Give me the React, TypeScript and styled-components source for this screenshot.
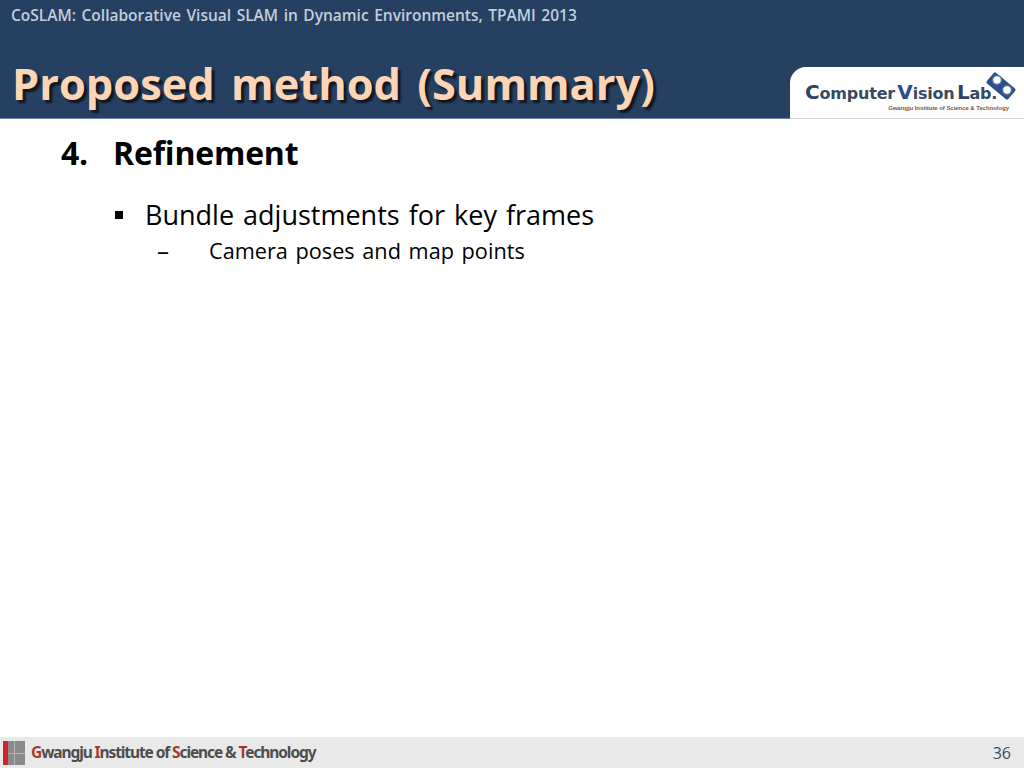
import React from 'react';
import styled, { createGlobalStyle } from 'styled-components';

const GlobalStyle = createGlobalStyle`
  html, body {
    margin: 0;
    padding: 0;
    background: #fff;
  }
`;

const Slide = styled.div`
  width: 1024px;
  height: 768px;
  display: flex;
  flex-direction: column;
  overflow: hidden;
  font-family: 'Open Sans', 'Noto Sans', sans-serif;
`;

const Header = styled.header`
  height: 118px;
  flex: none;
  background: #254061;
  border-bottom: 1px solid #6f83a0;
  display: flex;
  justify-content: space-between;
  align-items: flex-end;
`;

const HeaderText = styled.div`
  display: flex;
  flex-direction: column;
  align-self: stretch;
  padding-left: 11px;
`;

const Conference = styled.div`
  margin-top: 5px;
  font-size: 15.5px;
  line-height: 20px;
  font-weight: 600;
  color: #c3ced9;
  word-spacing: 1.5px;
`;

const Title = styled.h1`
  margin: 30px 0 0 1px;
  font-size: 43.4px;
  line-height: 58px;
  font-weight: 700;
  word-spacing: 5px;
  color: #fbd5b5;
  text-shadow: 3px 3px 2px #10161f;
  white-space: nowrap;
`;

const LogoCard = styled.div`
  width: 234px;
  height: 52px;
  margin-bottom: -1px;
  background: #fff;
  border-top-left-radius: 16px;
  border-bottom: 1px solid #d5d5d5;
  display: flex;
  flex-direction: column;
  align-items: flex-start;
  padding: 14px 0 0 15px;
  box-sizing: border-box;
  position: relative;
`;

const LogoName = styled.div`
  font-family: 'DejaVu Sans', sans-serif;
  font-size: 16px;
  line-height: 22px;
  font-weight: 700;
  color: #3a4a5e;
  white-space: nowrap;
  word-spacing: -3px;
  letter-spacing: -0.2px;
`;

const LogoInitial = styled.span<{ $blue?: boolean }>`
  color: ${({ $blue }) => ($blue ? '#2b4f8c' : '#31445e')};
  font-size: 20px;
`;

const LogoSub = styled.div`
  align-self: flex-end;
  margin: -1px 15px 0 0;
  font-family: 'Liberation Sans', sans-serif;
  font-size: 6px;
  line-height: 8px;
  font-weight: 700;
  letter-spacing: -0.05px;
  color: #7a5a4a;
  white-space: nowrap;
`;

const CameraMark = styled.svg`
  position: absolute;
  right: 8px;
  top: 4px;
`;

const Content = styled.main`
  flex: 1;
  padding: 13px 0 0 61px;
  color: #000;
`;

const HeadingRow = styled.div`
  display: flex;
  font-size: 32px;
  line-height: 42px;
  font-weight: 700;
  letter-spacing: -0.2px;
`;

const HeadingNumber = styled.span`
  width: 52px;
`;

const BulletRow = styled.div`
  display: flex;
  align-items: center;
  margin: 23px 0 0 54px;
  font-size: 27px;
  line-height: 36px;
  word-spacing: 2px;
`;

const Square = styled.span`
  width: 8px;
  height: 8px;
  background: #000;
  margin-right: 22px;
`;

const SubRow = styled.div`
  display: flex;
  align-items: center;
  margin: 0 0 0 96px;
  font-size: 21.7px;
  line-height: 36px;
  word-spacing: 2px;
`;

const Dash = styled.span`
  width: 52px;
  font-size: 24px;
`;

const Footer = styled.footer`
  height: 31px;
  flex: none;
  background: #e9e9e9;
  display: flex;
  align-items: center;
  padding: 0 13px 0 3px;
`;

const GistMark = styled.svg`
  flex: none;
`;

const Institute = styled.div`
  margin: 0 0 2px 6px;
  font-family: 'Noto Sans', sans-serif;
  font-size: 15.5px;
  font-weight: 700;
  letter-spacing: -1.1px;
  color: #4d4d4f;
  white-space: nowrap;
`;

const Accent = styled.span`
  color: #a8372f;
`;

const PageNumber = styled.div`
  margin-left: auto;
  font-size: 16px;
  color: #3b4a63;
`;

export default function App() {
  return (
    <Slide>
      <GlobalStyle />
      <Header>
        <HeaderText>
          <Conference>CoSLAM: Collaborative Visual SLAM in Dynamic Environments, TPAMI 2013</Conference>
          <Title>Proposed method (Summary)</Title>
        </HeaderText>
        <LogoCard>
          <LogoName>
            <LogoInitial>C</LogoInitial>omputer <LogoInitial $blue>V</LogoInitial>ision <LogoInitial>L</LogoInitial>ab.
          </LogoName>
          <LogoSub>Gwangju Institute of Science &amp; Technology</LogoSub>
          <CameraMark width="30" height="30" viewBox="0 0 30 30">
            <rect x="1" y="8" width="28" height="14" rx="2" fill="#2b4f8c" transform="rotate(40 15 15)" />
            <circle cx="11" cy="9" r="4.5" fill="#fff" stroke="#5a6f90" strokeWidth="1.5" />
            <circle cx="21" cy="19" r="4.5" fill="#fff" stroke="#5a6f90" strokeWidth="1.5" />
          </CameraMark>
        </LogoCard>
      </Header>
      <Content>
        <HeadingRow>
          <HeadingNumber>4.</HeadingNumber>
          <span>Refinement</span>
        </HeadingRow>
        <BulletRow>
          <Square />
          <span>Bundle adjustments for key frames</span>
        </BulletRow>
        <SubRow>
          <Dash>–</Dash>
          <span>Camera poses and map points</span>
        </SubRow>
      </Content>
      <Footer>
        <GistMark width="22" height="24" viewBox="0 0 22 24">
          <rect width="22" height="24" fill="#8a8a8a" />
          <rect width="5" height="24" fill="#d2232a" />
          <rect x="11" y="0" width="1" height="24" fill="#b5b5b5" />
          <rect x="5" y="12" width="17" height="1" fill="#b5b5b5" />
        </GistMark>
        <Institute>
          <Accent>G</Accent>wangju <Accent>I</Accent>nstitute of <Accent>S</Accent>cience &amp; <Accent>T</Accent>echnology
        </Institute>
        <PageNumber>36</PageNumber>
      </Footer>
    </Slide>
  );
}
